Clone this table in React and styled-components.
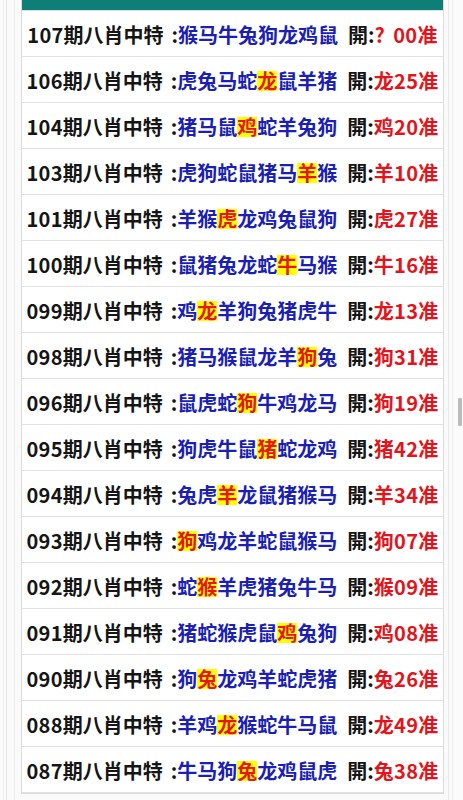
import React from "react";
import styled, { createGlobalStyle } from "styled-components";

const Global = createGlobalStyle`
  html, body { margin: 0; padding: 0; background: #fbfbfb; }
  body { font-family: "Noto Sans CJK SC", "Noto Sans", sans-serif; overflow: hidden; }
`;

const Shell = styled.div`
  margin: 0 10px 0 3px;
  border-left: 1px solid #ececec;
  border-right: 1px solid #ececec;
  min-height: 800px;
  box-sizing: border-box;
`;

const Inner = styled.div`
  margin: 0 3px 0 2px;
  border-left: 1px solid #e4e4e4;
  border-right: 1px solid #e8e8e8;
  min-height: 800px;
  padding: 0 5px 0 7px;
  box-sizing: border-box;
  background: #fafafa;
`;

const Wrap = styled.div`
  border-left: 1px solid #ececec;
  padding: 0 0 0 6px;
  min-height: 800px;
  box-sizing: border-box;
`;

const Card = styled.div`
  background: #fff;
  border: 1px solid #dcdcdc;
  border-top: none;
  width: 423px;
  box-sizing: border-box;
`;

const HeaderBar = styled.div`
  height: 10px;
  background: #0d7f76;
  border-bottom: 1px solid #cfe6e4;
`;

const Row = styled.div`
  height: 46px;
  box-sizing: border-box;
  border-bottom: 1px solid #e2e2e2;
  display: flex;
  align-items: center;
  justify-content: center;
  font-size: 20px;
  font-weight: 700;
  white-space: nowrap;
  color: #151515;
  padding-top: 2px;
`;

const Issue = styled.span`
  letter-spacing: 0.3px;
`;

const Colon = styled.span`
  margin-left: ${(p) => p.$gap}px;
`;

const Zodiac = styled.span`
  color: #1b1fb3;
  margin-right: 10px;
`;

const Hit = styled.span`
  display: inline-block;
  line-height: 20px;
  height: 20px;
  background: #ffff00;
  color: #e5161c;
`;

const Result = styled.span`
  color: #e3141b;
  letter-spacing: 0.3px;
`;

const Unknown = styled.span`
  margin-right: 8px;
`;

const Thumb = styled.div`
  position: fixed;
  right: 1px;
  top: 398px;
  width: 4px;
  height: 28px;
  background: #bdbdbd;
  border-radius: 1px;
`;

const rows = [
  ["107", "猴马牛兔狗龙鸡鼠", -1, "00准", true],
  ["106", "虎兔马蛇龙鼠羊猪", 4, "龙25准"],
  ["104", "猪马鼠鸡蛇羊兔狗", 3, "鸡20准"],
  ["103", "虎狗蛇鼠猪马羊猴", 6, "羊10准"],
  ["101", "羊猴虎龙鸡兔鼠狗", 2, "虎27准"],
  ["100", "鼠猪兔龙蛇牛马猴", 5, "牛16准"],
  ["099", "鸡龙羊狗兔猪虎牛", 1, "龙13准"],
  ["098", "猪马猴鼠龙羊狗兔", 6, "狗31准"],
  ["096", "鼠虎蛇狗牛鸡龙马", 3, "狗19准"],
  ["095", "狗虎牛鼠猪蛇龙鸡", 4, "猪42准"],
  ["094", "兔虎羊龙鼠猪猴马", 2, "羊34准"],
  ["093", "狗鸡龙羊蛇鼠猴马", 0, "狗07准"],
  ["092", "蛇猴羊虎猪兔牛马", 1, "猴09准"],
  ["091", "猪蛇猴虎鼠鸡兔狗", 5, "鸡08准"],
  ["090", "狗兔龙鸡羊蛇虎猪", 1, "兔26准"],
  ["088", "羊鸡龙猴蛇牛马鼠", 2, "龙49准"],
  ["087", "牛马狗兔龙鸡鼠虎", 3, "兔38准"],
];

export default function App() {
  return (
    <>
      <Global />
      <Shell>
        <Inner>
          <Wrap>
            <Card>
              <HeaderBar />
              {rows.map(([no, z, hi, res, unknown]) => (
                <Row key={no}>
                  <Issue>{no}</Issue>期八肖中特
                  <Colon $gap={8}>:</Colon>
                  <Zodiac>
                    {[...z].map((c, i) =>
                      i === hi ? <Hit key={i}>{c}</Hit> : <React.Fragment key={i}>{c}</React.Fragment>
                    )}
                  </Zodiac>
                  開:
                  <Result>
                    {unknown && <Unknown>?</Unknown>}
                    {res}
                  </Result>
                </Row>
              ))}
            </Card>
          </Wrap>
        </Inner>
      </Shell>
      <Thumb />
    </>
  );
}
